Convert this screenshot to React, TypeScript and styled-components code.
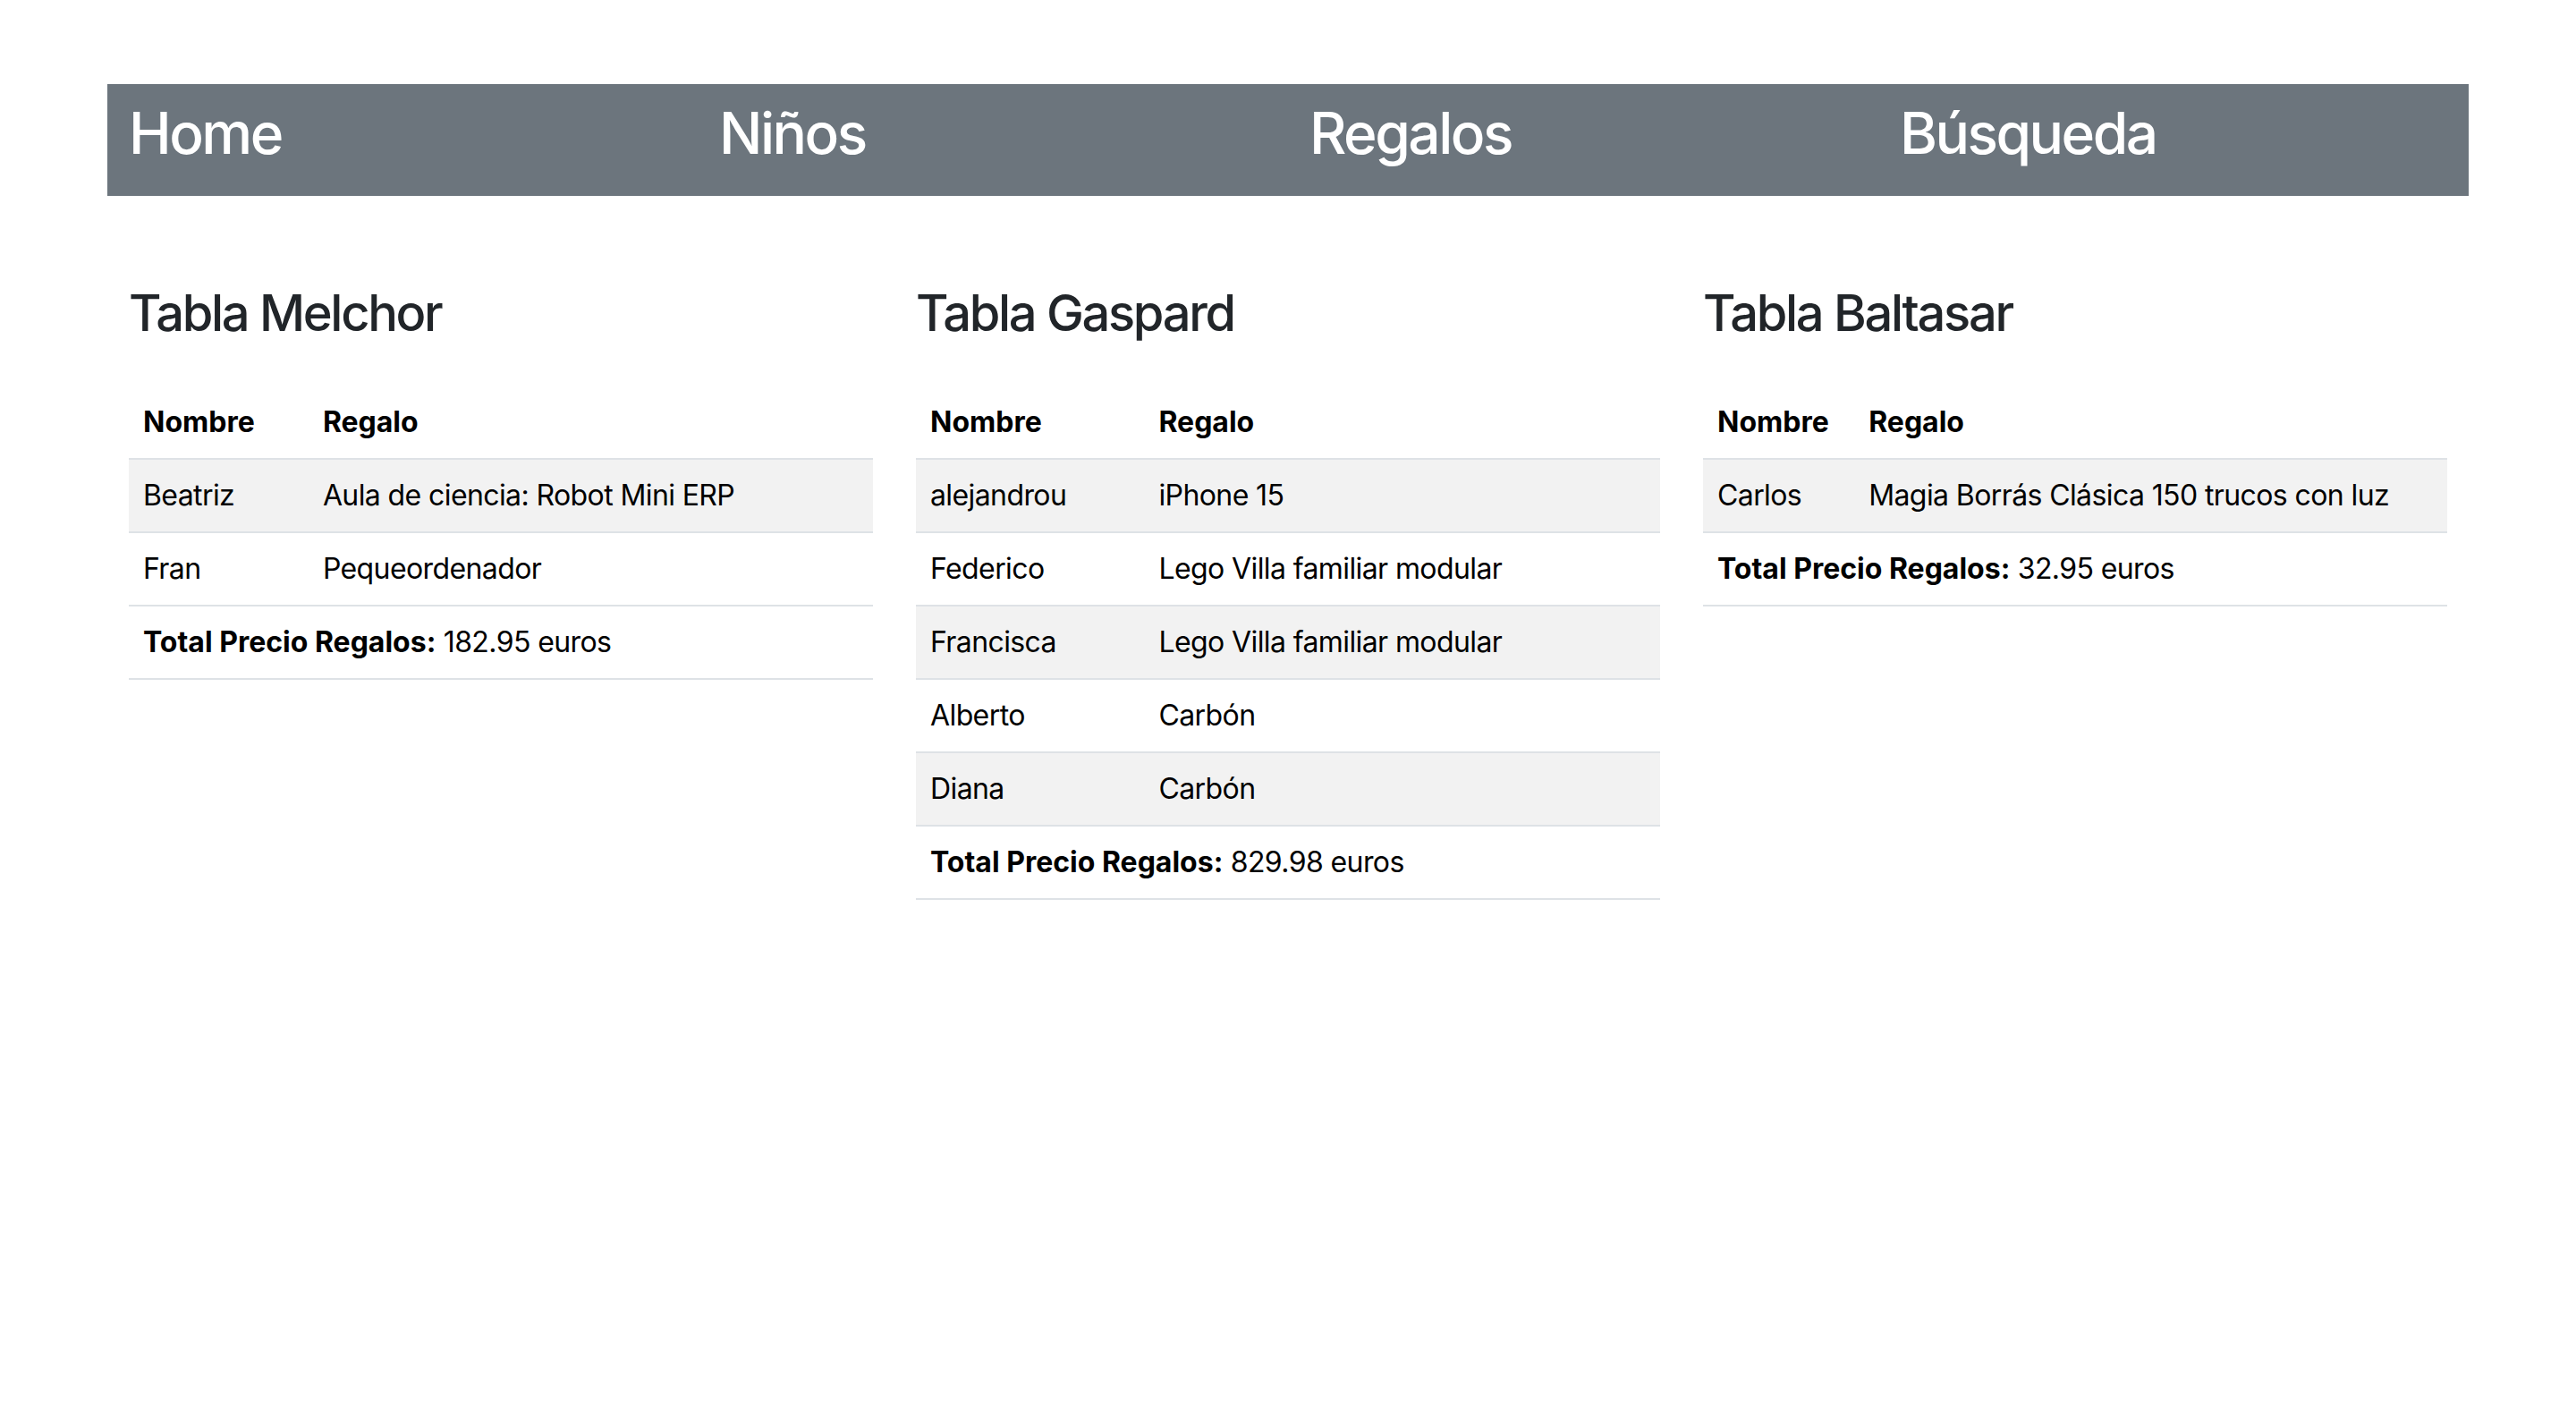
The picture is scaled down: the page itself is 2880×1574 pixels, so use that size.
import styled, { createGlobalStyle } from "styled-components";

const GlobalStyle = createGlobalStyle`
    body {
        margin: 0;
        background: #ffffff;
        font-family: Inter, "Noto Sans", "Liberation Sans", sans-serif;
        color: #212529;
    }
`;

const Page = styled.div`
    width: 2640px;
    margin: 94px auto 0;
`;

const NavBar = styled.nav`
    display: grid;
    grid-template-columns: repeat(4, 1fr);
    background: #6c757d;
    padding: 17px 0 15px;
`;

const NavItem = styled.h2`
    margin: 0 0 16px;
    padding: 0 24px;
    font-size: 64px;
    font-weight: 500;
    line-height: 1.2;
    letter-spacing: -2.5px;
    color: #ffffff;
`;

const Content = styled.div`
    display: grid;
    grid-template-columns: repeat(3, 1fr);
    margin-top: 98px;
`;

const Column = styled.section`
    padding: 0 24px;
`;

const Title = styled.h3`
    margin: 0 0 16px;
    font-size: 56px;
    font-weight: 500;
    line-height: 1.2;
    letter-spacing: -2.3px;
    color: #212529;
`;

const Table = styled.table`
    width: 100%;
    margin-top: 48px;
    border-collapse: collapse;
    font-size: 32px;
    line-height: 1.5;
    color: #000000;

    th,
    td {
        padding: 16px;
        text-align: left;
        border-bottom: 2px solid #dee2e6;
    }

    td {
        letter-spacing: -0.6px;
    }

    th {
        font-weight: 700;
    }

    tbody tr:nth-of-type(odd) {
        background: #f2f2f2;
    }

    strong {
        font-weight: 700;
        letter-spacing: 0;
    }
`;

type Row = { nombre: string; regalo: string };

type Rey = { nombre: string; filas: Row[]; total: string };

const reyes: Rey[] = [
    {
        nombre: "Melchor",
        filas: [
            { nombre: "Beatriz", regalo: "Aula de ciencia: Robot Mini ERP" },
            { nombre: "Fran", regalo: "Pequeordenador" },
        ],
        total: "182.95",
    },
    {
        nombre: "Gaspard",
        filas: [
            { nombre: "alejandrou", regalo: "iPhone 15" },
            { nombre: "Federico", regalo: "Lego Villa familiar modular" },
            { nombre: "Francisca", regalo: "Lego Villa familiar modular" },
            { nombre: "Alberto", regalo: "Carbón" },
            { nombre: "Diana", regalo: "Carbón" },
        ],
        total: "829.98",
    },
    {
        nombre: "Baltasar",
        filas: [{ nombre: "Carlos", regalo: "Magia Borrás Clásica 150 trucos con luz" }],
        total: "32.95",
    },
];

const TablaRey = ({ rey }: { rey: Rey }) => (
    <Column>
        <Title>Tabla {rey.nombre}</Title>
        <Table>
            <thead>
                <tr>
                    <th>Nombre</th>
                    <th>Regalo</th>
                </tr>
            </thead>
            <tbody>
                {rey.filas.map((fila, i) => (
                    <tr key={i}>
                        <td>{fila.nombre}</td>
                        <td>{fila.regalo}</td>
                    </tr>
                ))}
            </tbody>
            <tfoot>
                <tr>
                    <td colSpan={2}>
                        <strong>Total Precio Regalos:</strong> {rey.total} euros
                    </td>
                </tr>
            </tfoot>
        </Table>
    </Column>
);

const App = () => {
    return (
        <>
            <GlobalStyle />
            <Page>
                <NavBar>
                    <NavItem>Home</NavItem>
                    <NavItem>Niños</NavItem>
                    <NavItem>Regalos</NavItem>
                    <NavItem>Búsqueda</NavItem>
                </NavBar>
                <Content>
                    {reyes.map((rey) => (
                        <TablaRey key={rey.nombre} rey={rey} />
                    ))}
                </Content>
            </Page>
        </>
    );
};

export default App;
